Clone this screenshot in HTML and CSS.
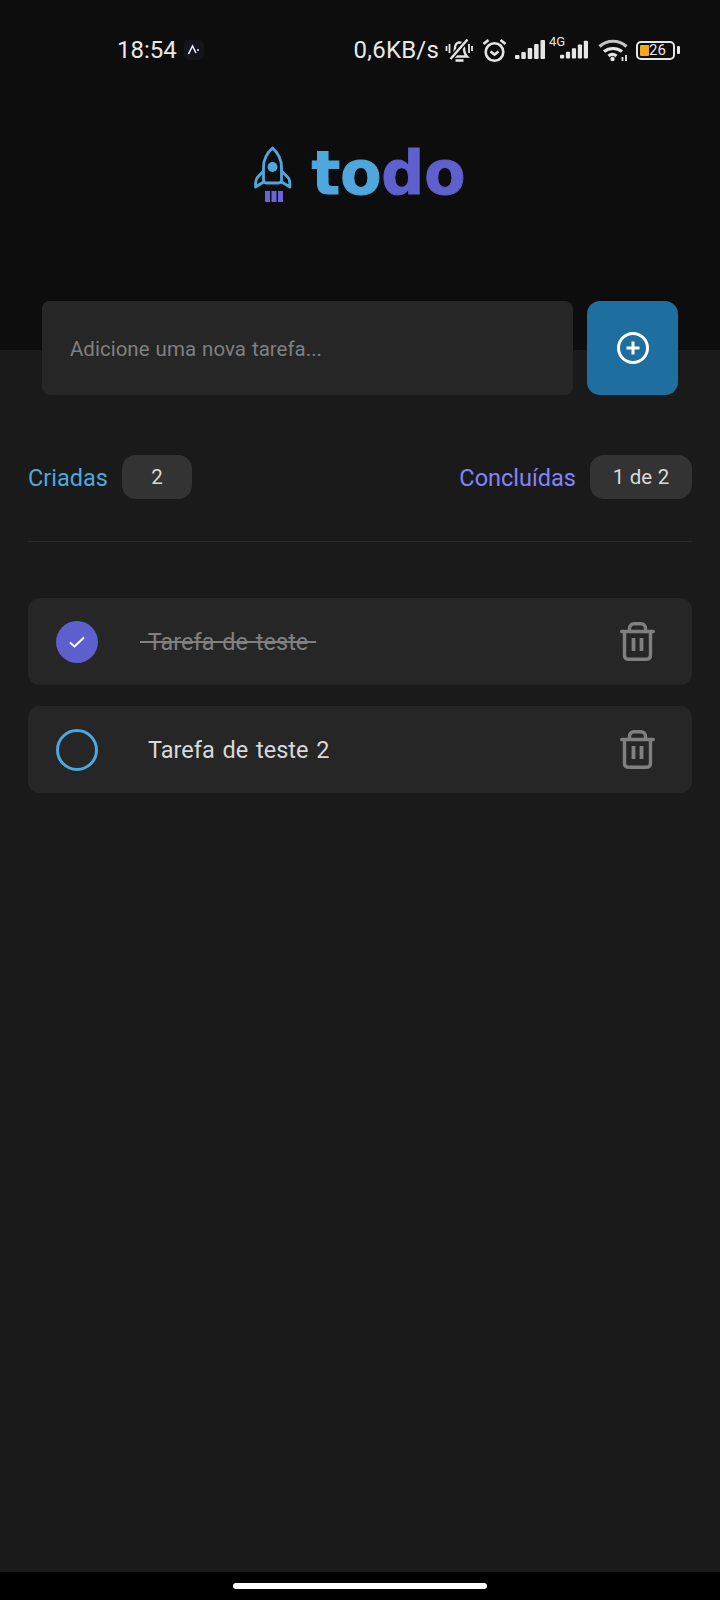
FILE: index.html
```html
<!DOCTYPE html>
<html lang="pt-BR">
<head>
<meta charset="utf-8">
<title>todo</title>
<link rel="stylesheet" href="styles.css">
</head>
<body>
<div class="app">
  <header class="header">
    <div class="statusbar">
      <div class="status-left">
        <span class="clock">18:54</span>
        <span class="notif">
          <svg width="20" height="20" viewBox="0 0 20 20"><path d="M4.500 14L8.500 6l3.500 7" fill="none" stroke="#f0f0ff" stroke-width="1.600"/><circle cx="14" cy="10" r="1" fill="#f0f0ff"/></svg>
        </span>
      </div>
      <div class="status-right">
        <span class="speed">0,6KB/s</span>
        <svg class="ic-bell" width="28" height="28" viewBox="0 0 28 28" fill="none" stroke="#e6e6e6" stroke-width="2.400"><path d="M7 20.500c2-2 3-4 3-8.500 0-3 2-5.500 4.500-5.500S19 9 19 12c0 4.500 1 6.500 3 8.500z"/><path d="M10.500 24.500h8" stroke-width="2.600"/><path d="M1.500 10v5M4.500 8v9M24 8v9M27 10v5" stroke-width="1.800"/><path d="M5 23.500L23 3" stroke="#0d0d0d" stroke-width="5"/><path d="M5.500 23L22.500 3.500"/></svg>
        <svg class="ic-alarm" width="25" height="25" viewBox="0 0 25 25" fill="none" stroke="#e6e6e6" stroke-width="2.600"><circle cx="12.500" cy="14" r="8.800"/><path d="M8.500 13.500l4 3 4-3"/><path d="M1.500 6L6.500 2M23.500 6L18.500 2" stroke-width="2.800"/></svg>
        <svg class="ic-signal" width="30" height="22" viewBox="0 0 30 22" fill="#e6e6e6"><rect x="0" y="16" width="4.500" height="4" rx="1"/><rect x="6.300" y="13" width="4.500" height="7" rx="1"/><rect x="12.700" y="9" width="4.500" height="11" rx="1"/><rect x="19.100" y="5" width="4.500" height="15" rx="1"/><rect x="25.500" y="1" width="4.500" height="19" rx="1"/></svg>
        <span class="net">
          <span class="net-label">4G</span>
          <svg width="28" height="22" viewBox="0 0 30 22" fill="#e6e6e6"><rect x="0" y="16" width="4.500" height="4" rx="1"/><rect x="6.300" y="13" width="4.500" height="7" rx="1"/><rect x="12.700" y="9" width="4.500" height="11" rx="1"/><rect x="19.100" y="5" width="4.500" height="15" rx="1"/><rect x="25.500" y="1" width="4.500" height="19" rx="1"/></svg>
        </span>
        <svg class="ic-wifi" width="30" height="24" viewBox="0 0 30 24" fill="none" stroke="#c4c4c4" stroke-width="3.200"><path d="M1.500 8.500C9 1.500 21 1.500 28.500 8.500"/><path d="M6 13.500C11 9.500 19 9.500 24 13.500" stroke="#e6e6e6"/><path d="M10.500 18c2.500-2 5.500-2 8 0" stroke="#e6e6e6"/><circle cx="14.500" cy="21" r="2.200" fill="#e6e6e6" stroke="none"/><path d="M24.500 19v4M28 17v6" stroke="#e6e6e6" stroke-width="1.800"/></svg>
        <span class="battery">
          <span class="battery-body"><span class="battery-fill"></span><span class="battery-text">26</span></span>
          <span class="battery-cap"></span>
        </span>
      </div>
    </div>
    <div class="logo">
      <svg class="rocket" width="40" height="58" viewBox="0 0 40 58">
        <g fill="none" stroke="#4ea8de" stroke-width="2.800" stroke-linejoin="round">
          <path d="M18.500 2C12 8 9.500 14 9.500 21v13c0 2 1 3 3 3h12c2 0 3-1 3-3V21c0-7-2.500-13-9-19z"/>
          <path d="M9.500 25L3 32c-1.200 2-1.500 5-1.500 9L9.500 36M27.500 25l7 7c1.200 2 1.500 5 1.500 9L27.500 36"/>
        </g>
        <circle cx="18.500" cy="21" r="5" fill="#4ea8de"/>
        <g fill="#6a64d8"><rect x="11" y="45" width="5" height="11"/><rect x="17.500" y="45" width="5" height="11"/><rect x="24" y="45" width="5" height="11"/></g>
      </svg>
      <h1 class="wordmark"><span class="to">to</span><span class="do">do</span></h1>
    </div>
  </header>

  <main class="content">
    <form class="new-task">
      <div class="new-task-input">Adicione uma nova tarefa...</div>
      <button class="add-btn" type="button" aria-label="Adicionar">
        <svg width="34" height="34" viewBox="0 0 34 34" fill="none" stroke="#fff" stroke-width="3"><circle cx="17" cy="17" r="14.500"/><path d="M17 10.500v13M10.500 17h13"/></svg>
      </button>
    </form>

    <section class="stats">
      <div class="stat"><span class="stat-label created">Criadas</span><span class="pill pill-count">2</span></div>
      <div class="stat"><span class="stat-label done">Concluídas</span><span class="pill pill-done">1 de 2</span></div>
    </section>

    <ul class="tasks">
      <li class="task">
        <span class="check check-on"><svg width="18" height="14" viewBox="0 0 18 14" fill="none" stroke="#fff" stroke-width="2"><path d="M2 7.500l4.500 4L16 2.500"/></svg></span>
        <span class="task-text task-done">&nbsp;Tarefa de teste&nbsp;</span>
        <svg class="trash" width="35" height="39" viewBox="0 0 35 39" fill="none" stroke="#808080" stroke-width="3.400" stroke-linecap="round" stroke-linejoin="round"><path d="M1.700 9.500h31.600M4.500 10v23c0 3 1.500 4.300 4.500 4.300h17c3 0 4.500-1.300 4.500-4.300V10M9.500 9V6.500C9.500 3.500 11.500 1.800 14 1.800h7c2.500 0 4.500 1.700 4.500 4.700V9"/><path d="M13.500 16v13M21.500 16v13" stroke-width="3.800" stroke-linecap="butt"/></svg>
      </li>
      <li class="task">
        <span class="check check-off"></span>
        <span class="task-text">Tarefa de teste 2</span>
        <svg class="trash" width="35" height="39" viewBox="0 0 35 39" fill="none" stroke="#808080" stroke-width="3.400" stroke-linecap="round" stroke-linejoin="round"><path d="M1.700 9.500h31.600M4.500 10v23c0 3 1.500 4.300 4.500 4.300h17c3 0 4.500-1.300 4.500-4.300V10M9.500 9V6.500C9.500 3.500 11.500 1.800 14 1.800h7c2.500 0 4.500 1.700 4.500 4.700V9"/><path d="M13.500 16v13M21.500 16v13" stroke-width="3.800" stroke-linecap="butt"/></svg>
      </li>
    </ul>
  </main>

  <footer class="navbar"><span class="home-bar"></span></footer>
</div>
</body>
</html>
```
FILE: styles.css
```css
* { box-sizing: border-box; }
html, body { margin: 0; padding: 0; }
body { background: #1a1a1a; font-family: Roboto, "Noto Sans", sans-serif; color: #d9d9d9; }
.app { width: 720px; height: 1600px; display: flex; flex-direction: column; overflow: hidden; }

.header { height: 350px; flex: none; background: #0d0d0d; display: flex; flex-direction: column; }
.statusbar { display: flex; justify-content: space-between; align-items: center; height: 24px; margin-top: 38px; padding: 0 40px 0 117px; color: #e8e8e8; font-size: 24px; }
.status-left, .status-right { display: flex; align-items: center; }
.clock { line-height: 24px; }
.notif { width: 20px; height: 20px; margin-left: 7px; border-radius: 5px; background: #14141b; display: flex; }
.speed { line-height: 24px; letter-spacing: 0.2px; }
.ic-bell { margin-left: 6px; }
.ic-alarm { margin-left: 9px; }
.ic-signal { margin-left: 8px; }
.net { position: relative; display: flex; margin-left: 4px; padding-left: 11px; }
.net-label { position: absolute; left: 0; top: -4px; font-size: 13px; line-height: 13px; color: #e6e6e6; }
.ic-wifi { margin-left: 10px; }
.battery { display: flex; align-items: center; margin-left: 8px; }
.battery-body { width: 39px; height: 19px; border: 2px solid #e6e6e6; border-radius: 5px; display: flex; align-items: center; padding-left: 2px; }
.battery-fill { width: 9px; height: 11px; background: #f5a623; border-radius: 1px; }
.battery-text { font-size: 15px; line-height: 15px; color: #e6e6e6; }
.battery-cap { width: 3px; height: 8px; margin-left: 2px; background: #e6e6e6; border-radius: 1px; }

.logo { display: flex; justify-content: center; align-items: flex-start; gap: 17px; margin-top: 84px; }
.wordmark { margin: 1px 0 0; font-family: "DejaVu Sans", sans-serif; font-weight: 700; font-size: 60px; line-height: 52px; -webkit-text-stroke: 1px currentColor; }
.to { color: #4ea8de; }
.do { color: #5e60ce; }

.content { flex: 1; padding: 0 28px; }
.new-task { display: flex; gap: 14px; margin: -49px 14px 0; position: relative; }
.new-task-input { flex: 1; height: 94px; background: #262626; border-radius: 8px; padding: 1px 28px 0; display: flex; align-items: center; font-size: 20.5px; word-spacing: 1px; color: #808080; }
.add-btn { width: 91px; height: 94px; flex: none; background: #1e6f9f; border: 0; border-radius: 13px; display: flex; align-items: center; justify-content: center; padding: 0; }

.stats { display: flex; justify-content: space-between; margin-top: 60px; padding-bottom: 42px; border-bottom: 1px solid #2a2a2a; }
.stat { display: flex; align-items: center; gap: 14px; }
.stat-label { font-size: 23.5px; padding-top: 2px; }
.created { color: #4ea8de; }
.done { color: #8284fa; }
.pill { height: 44px; background: #333; border-radius: 14px; display: flex; align-items: center; justify-content: center; font-size: 20.5px; word-spacing: 0.5px; color: #d9d9d9; }
.pill-count { width: 70px; }
.pill-done { width: 102px; }

.tasks { list-style: none; margin: 56px 0 0; padding: 0; display: flex; flex-direction: column; gap: 21px; }
.task { height: 87px; background: #262626; border-radius: 12px; display: flex; align-items: center; padding: 0 37px 0 28px; }
.check { width: 42px; height: 42px; border-radius: 50%; flex: none; display: flex; align-items: center; justify-content: center; }
.check-on { background: #5e60ce; }
.check-off { border: 3.5px solid #4ea8de; }
.task-text { flex: 1; margin-left: 50px; padding-top: 1px; font-size: 23.5px; word-spacing: 2px; color: #d9d9d9; }
.task-done { margin-left: 42px; color: #808080; text-decoration: line-through; }
.trash { flex: none; }

.navbar { height: 28px; flex: none; background: #000; display: flex; justify-content: center; padding-top: 11px; }
.home-bar { width: 254px; height: 6px; background: #fff; border-radius: 3px; }
```
